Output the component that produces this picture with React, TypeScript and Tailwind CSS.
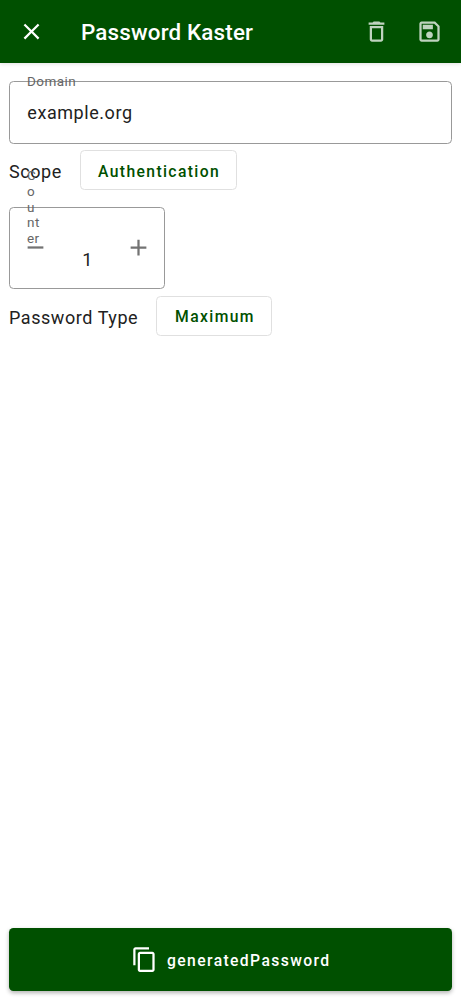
import React from "react";

const paths = {
  close: "M19 6.41L17.59 5 12 10.59 6.41 5 5 6.41 10.59 12 5 17.59 6.41 19 12 13.41 17.59 19 19 17.59 13.41 12z",
  trash: "M6 19c0 1.1.9 2 2 2h8c1.1 0 2-.9 2-2V7H6v12zM8 9h8v10H8V9zm7.5-5l-1-1h-5l-1 1H5v2h14V4z",
  save: "M17 3H5c-1.11 0-2 .9-2 2v14c0 1.1.89 2 2 2h14c1.1 0 2-.9 2-2V7l-4-4zm2 16H5V5h11.17L19 7.83V19zm-7-7c-1.66 0-3 1.34-3 3s1.34 3 3 3 3-1.34 3-3-1.34-3-3-3zM6 6h9v4H6z",
  minus: "M19 13H5v-2h14v2z",
  plus: "M19 13h-6v6h-2v-6H5v-2h6V5h2v6h6v2z",
  copy: "M16 1H4c-1.1 0-2 .9-2 2v14h2V3h12V1zm3 4H8c-1.1 0-2 .9-2 2v14c0 1.1.9 2 2 2h11c1.1 0 2-.9 2-2V7c0-1.1-.9-2-2-2zm0 16H8V7h11v14z",
};

function Icon({ name, className = "" }: { name: keyof typeof paths; className?: string }) {
  return (
    <svg viewBox="0 0 24 24" fill="currentColor" aria-hidden="true" className={`size-[27px] shrink-0 ${className}`}>
      <path d={paths[name]} />
    </svg>
  );
}

function Choice({ label, value, className }: { label: string; value: string; className: string }) {
  return (
    <div className="flex h-10 items-center">
      <span className="whitespace-nowrap pt-[2px] text-[18px] tracking-[0.56px]">{label}</span>
      <button className={`h-10 shrink-0 rounded-[4.5px] border border-[#e0e0e0] pl-[1.5px] pt-[2px] text-[15.7px] font-medium tracking-[1.38px] text-[#005000] ${className}`}>
        {value}
      </button>
    </div>
  );
}

export default function App() {
  return (
    <div className="flex h-[1000px] w-[461px] flex-col bg-white font-['Roboto',sans-serif] text-[#212121]">
      <header className="flex h-[63px] shrink-0 items-center bg-[#005000] pl-[18px] pr-[18px] text-white shadow-[0_1px_4px_rgba(0,0,0,0.12)]">
        <button aria-label="Close"><Icon name="close" /></button>
        <h1 className="ml-9 mt-px flex-1 whitespace-nowrap text-[22.4px] font-medium leading-[26px] tracking-[0.17px]">Password Kaster</h1>
        <div className="flex gap-[26.5px] text-[#bfd3bf]">
          <button aria-label="Delete"><Icon name="trash" /></button>
          <button aria-label="Save"><Icon name="save" /></button>
        </div>
      </header>

      <main className="flex flex-1 flex-col px-[9px] pb-[9px] pt-[18px]">
        <div className="relative flex h-[62.5px] items-center rounded-[4.5px] border border-[#999999] px-[17.3px]">
          <label className="absolute left-[17px] top-[-9px] text-[13.5px] leading-4 tracking-[0.45px] text-[#666666]">Domain</label>
          <span className="text-[18px] tracking-[0.56px]">example.org</span>
        </div>

        <div className="mt-[6.9px]">
          <Choice label="Scope" value="Authentication" className="ml-[18px] w-[157px]" />
        </div>

        <div className="relative mt-[16.6px] flex h-[82px] w-[156.4px] items-center justify-between rounded-[4.5px] border border-[#999999] px-3 text-[#737373]">
          <div className="absolute left-[17px] top-[-40px] flex flex-col text-[13.5px] leading-[15.8px] tracking-[0.45px] text-[#666666]">
            <span>C</span><span>o</span><span>u</span><span>nt</span><span>er</span>
          </div>
          <button aria-label="Decrease"><Icon name="minus" /></button>
          <span className="mt-6 text-[18px] text-[#212121]">1</span>
          <button aria-label="Increase"><Icon name="plus" /></button>
        </div>

        <div className="mt-[7.2px]">
          <Choice label="Password Type" value="Maximum" className="ml-[18px] w-[116px]" />
        </div>

        <button className="mt-auto flex h-[63px] items-center justify-center gap-[9.5px] rounded-[4.5px] bg-[#005000] text-[15.7px] font-medium tracking-[1.38px] text-white shadow-[0_2px_4px_rgba(0,0,0,0.3)]">
          <Icon name="copy" />
          <span className="pt-[2px]">generatedPassword</span>
        </button>
      </main>
    </div>
  );
}
